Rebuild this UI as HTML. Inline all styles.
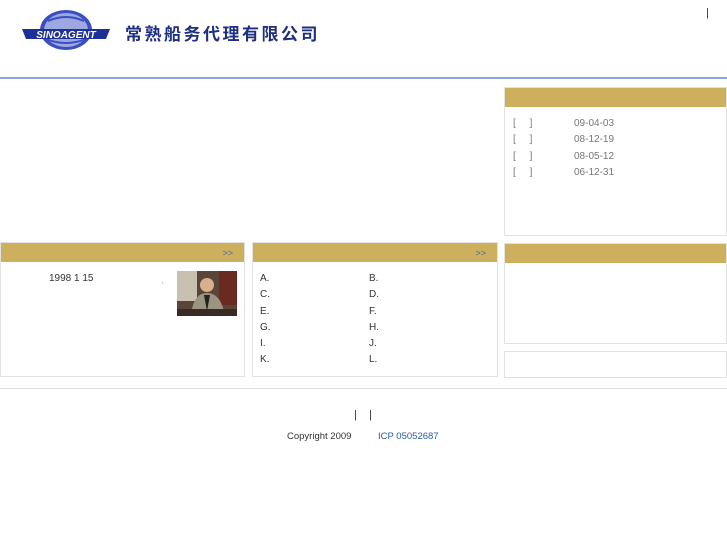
<!DOCTYPE html>
<html><head><meta charset="utf-8"><style>
*{margin:0;padding:0;box-sizing:border-box}
body{width:727px;height:545px;background:#fff;font-family:"Liberation Sans",Arial,sans-serif;font-size:10px;color:#333;position:relative;overflow:hidden}
.a{position:absolute}
.box{position:absolute;border:1px solid #e2e2e2;background:#fff}
.hd{height:19px;background:#cdb05e;position:relative}
.more{position:absolute;right:11px;top:5px;color:#4a6aa0;font-size:9px}
</style></head><body>
<svg class="a" style="left:20px;top:9px" width="92" height="42" viewBox="0 0 92 42">
<ellipse cx="46" cy="21" rx="26" ry="20" fill="#3a4ec0"/>
<ellipse cx="46" cy="21" rx="22" ry="17" fill="#fff" opacity=".5"/>
<path d="M28 12 Q46 4 64 12 M26 30 Q46 38 66 30" stroke="#3a4ec0" stroke-width="2" fill="none"/>
<path d="M2 20 L90 20 L86 30 L6 30 Z" fill="#1e2f96"/>
<text x="46" y="29" font-size="10" font-weight="bold" font-style="italic" fill="#fff" text-anchor="middle" font-family="Liberation Sans">SINOAGENT</text>
</svg>
<div class="a" style="left:125px;top:20px;font-size:17px;font-weight:bold;color:#1e2f80;letter-spacing:2.5px;font-family:'Liberation Sans','Noto Sans CJK SC',sans-serif">常熟船务代理有限公司</div>
<div class="a" style="left:706px;top:7px;font-size:11px">|</div>
<div class="a" style="left:0;top:77px;width:727px;height:2px;background:#8aa4dc"></div>

<div class="box" style="left:504px;top:87px;width:223px;height:149px">
<div class="hd"></div>
<div style="position:relative;color:#777;line-height:16.3px;margin-top:9px">
<div style="padding-left:8px">[&nbsp;&nbsp;&nbsp;&nbsp;&nbsp;]<span class="a" style="left:69px">09-04-03</span></div>
<div style="padding-left:8px">[&nbsp;&nbsp;&nbsp;&nbsp;&nbsp;]<span class="a" style="left:69px">08-12-19</span></div>
<div style="padding-left:8px">[&nbsp;&nbsp;&nbsp;&nbsp;&nbsp;]<span class="a" style="left:69px">08-05-12</span></div>
<div style="padding-left:8px">[&nbsp;&nbsp;&nbsp;&nbsp;&nbsp;]<span class="a" style="left:69px">06-12-31</span></div>
</div></div>

<div class="box" style="left:0;top:242px;width:245px;height:135px">
<div class="hd"><span class="more">&gt;&gt;</span></div>
<div class="a" style="left:48px;top:30px">1998 1 15</div>
<div class="a" style="left:161px;top:36px;font-size:6px">,</div>
<svg class="a" style="left:176px;top:28px" width="60" height="45"><rect width="60" height="45" fill="#5a4638"/><rect x="0" y="0" width="20" height="30" fill="#c8c0b0"/><rect x="42" y="0" width="18" height="34" fill="#6a2a20"/><circle cx="30" cy="14" r="7" fill="#d9b08c"/><path d="M14 45 Q16 22 30 22 Q44 22 48 45Z" fill="#9a9480"/><path d="M27 24 L30 40 L33 24Z" fill="#222"/><rect x="0" y="38" width="60" height="7" fill="#3a2a24"/></svg>
</div>

<div class="box" style="left:252px;top:242px;width:246px;height:135px">
<div class="hd"><span class="more">&gt;&gt;</span></div>
<div style="position:relative;line-height:16.3px;margin-top:9px;padding-left:7px">
<div>A.<span class="a" style="left:116px">B.</span></div>
<div>C.<span class="a" style="left:116px">D.</span></div>
<div>E.<span class="a" style="left:116px">F.</span></div>
<div>G.<span class="a" style="left:116px">H.</span></div>
<div>I.<span class="a" style="left:116px">J.</span></div>
<div>K.<span class="a" style="left:116px">L.</span></div>
</div></div>

<div class="box" style="left:504px;top:243px;width:223px;height:101px"><div class="hd"></div></div>
<div class="box" style="left:504px;top:351px;width:223px;height:27px"></div>

<div class="a" style="left:0;top:388px;width:727px;height:1px;background:#ddd"></div>
<div class="a" style="left:354px;top:409px;font-size:11px">|&nbsp;&nbsp;&nbsp;&nbsp;|</div>
<div class="a" style="left:287px;top:431px;font-size:9.5px">Copyright 2009</div>
<div class="a" style="left:378px;top:431px;font-size:9.5px;color:#2a5aa8">ICP 05052687</div>
</body></html>
